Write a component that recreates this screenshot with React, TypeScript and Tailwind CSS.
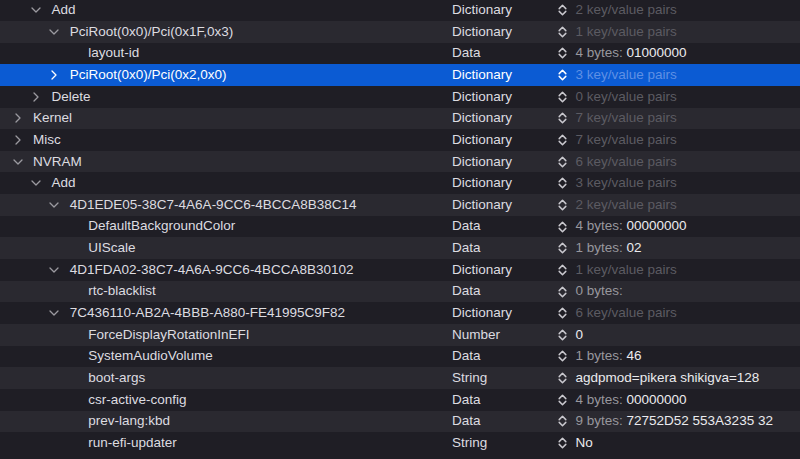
import React from 'react';

type Row = {
  key: string;
  level: number;
  open?: boolean;
  type: string;
  dim?: string;
  value?: string;
  selected?: boolean;
};

const rows: Row[] = [
  { key: 'Add', level: 1, open: true, type: 'Dictionary', dim: '2 key/value pairs' },
  { key: 'PciRoot(0x0)/Pci(0x1F,0x3)', level: 2, open: true, type: 'Dictionary', dim: '1 key/value pairs' },
  { key: 'layout-id', level: 3, type: 'Data', dim: '4 bytes: ', value: '01000000' },
  { key: 'PciRoot(0x0)/Pci(0x2,0x0)', level: 2, open: false, type: 'Dictionary', dim: '3 key/value pairs', selected: true },
  { key: 'Delete', level: 1, open: false, type: 'Dictionary', dim: '0 key/value pairs' },
  { key: 'Kernel', level: 0, open: false, type: 'Dictionary', dim: '7 key/value pairs' },
  { key: 'Misc', level: 0, open: false, type: 'Dictionary', dim: '7 key/value pairs' },
  { key: 'NVRAM', level: 0, open: true, type: 'Dictionary', dim: '6 key/value pairs' },
  { key: 'Add', level: 1, open: true, type: 'Dictionary', dim: '3 key/value pairs' },
  { key: '4D1EDE05-38C7-4A6A-9CC6-4BCCA8B38C14', level: 2, open: true, type: 'Dictionary', dim: '2 key/value pairs' },
  { key: 'DefaultBackgroundColor', level: 3, type: 'Data', dim: '4 bytes: ', value: '00000000' },
  { key: 'UIScale', level: 3, type: 'Data', dim: '1 bytes: ', value: '02' },
  { key: '4D1FDA02-38C7-4A6A-9CC6-4BCCA8B30102', level: 2, open: true, type: 'Dictionary', dim: '1 key/value pairs' },
  { key: 'rtc-blacklist', level: 3, type: 'Data', dim: '0 bytes:' },
  { key: '7C436110-AB2A-4BBB-A880-FE41995C9F82', level: 2, open: true, type: 'Dictionary', dim: '6 key/value pairs' },
  { key: 'ForceDisplayRotationInEFI', level: 3, type: 'Number', value: '0' },
  { key: 'SystemAudioVolume', level: 3, type: 'Data', dim: '1 bytes: ', value: '46' },
  { key: 'boot-args', level: 3, type: 'String', value: 'agdpmod=pikera shikigva=128' },
  { key: 'csr-active-config', level: 3, type: 'Data', dim: '4 bytes: ', value: '00000000' },
  { key: 'prev-lang:kbd', level: 3, type: 'Data', dim: '9 bytes: ', value: '72752D52 553A3235 32' },
  { key: 'run-efi-updater', level: 3, type: 'String', value: 'No' },
];

const indent = ['pl-[11px]', 'pl-[29.4px]', 'pl-[47.8px]', 'pl-[66.2px]'];

function Chevron({ open, selected }: { open: boolean; selected?: boolean }) {
  const color = selected ? '#ffffff' : '#9b9aa0';
  return open ? (
    <svg width="10" height="6" viewBox="0 0 10 6" fill="none">
      <path d="M1 1 L5 5 L9 1" stroke={color} strokeWidth="1.3" strokeLinecap="round" strokeLinejoin="round" />
    </svg>
  ) : (
    <svg width="6" height="10" viewBox="0 0 6 10" fill="none">
      <path d="M1 1 L5 5 L1 9" stroke={color} strokeWidth="1.3" strokeLinecap="round" strokeLinejoin="round" />
    </svg>
  );
}

function Stepper({ selected }: { selected?: boolean }) {
  const color = selected ? '#ffffff' : '#c9c8ce';
  return (
    <svg width="9" height="12" viewBox="0 0 9 12" fill="none">
      <path d="M1.2 4.6 L4.5 1.3 L7.8 4.6" stroke={color} strokeWidth="1.5" strokeLinecap="round" strokeLinejoin="round" />
      <path d="M1.2 7.4 L4.5 10.7 L7.8 7.4" stroke={color} strokeWidth="1.5" strokeLinecap="round" strokeLinejoin="round" />
    </svg>
  );
}

export default function App() {
  return (
    <div
      className="w-[800px] h-[459px] overflow-hidden bg-[#1f1e25] text-[13.5px] text-[#dddce0]"
      style={{ fontFamily: '"Liberation Sans", Arial, sans-serif' }}
    >
      <div className="-mt-[0.65px]">
        {rows.map((r, i) => {
          const bg = r.selected ? 'bg-[#0b5bd3]' : i % 2 === 0 ? 'bg-[#1f1e25]' : 'bg-[#2a2930]';
          const hasChildren = r.open !== undefined;
          return (
            <div key={i} className={`flex items-center h-[21.65px] ${bg}`}>
              <div className={`flex items-center w-[452px] shrink-0 ${indent[r.level]}`}>
                <div className="w-[22px] shrink-0 flex items-center">
                  <div className="w-[13px] flex justify-center items-center">
                    {hasChildren && <Chevron open={!!r.open} selected={r.selected} />}
                  </div>
                </div>
                <span className={`whitespace-nowrap ${r.selected ? 'text-white' : ''}`}>{r.key}</span>
              </div>
              <div className={`w-[106px] shrink-0 whitespace-nowrap ${r.selected ? 'text-white' : ''}`}>{r.type}</div>
              <div className="w-[17.5px] shrink-0 flex items-center">
                <Stepper selected={r.selected} />
              </div>
              <div className="whitespace-nowrap">
                {r.dim && (
                  <span
                    className={
                      r.selected
                        ? 'text-[#5f90e4]'
                        : r.value !== undefined || r.type === 'Data'
                          ? 'text-[#98979d]'
                          : 'text-[#5c5b62]'
                    }
                  >
                    {r.dim}
                  </span>
                )}
                {r.value && <span className="text-[#ebebee]">{r.value}</span>}
              </div>
            </div>
          );
        })}
      </div>
    </div>
  );
}
